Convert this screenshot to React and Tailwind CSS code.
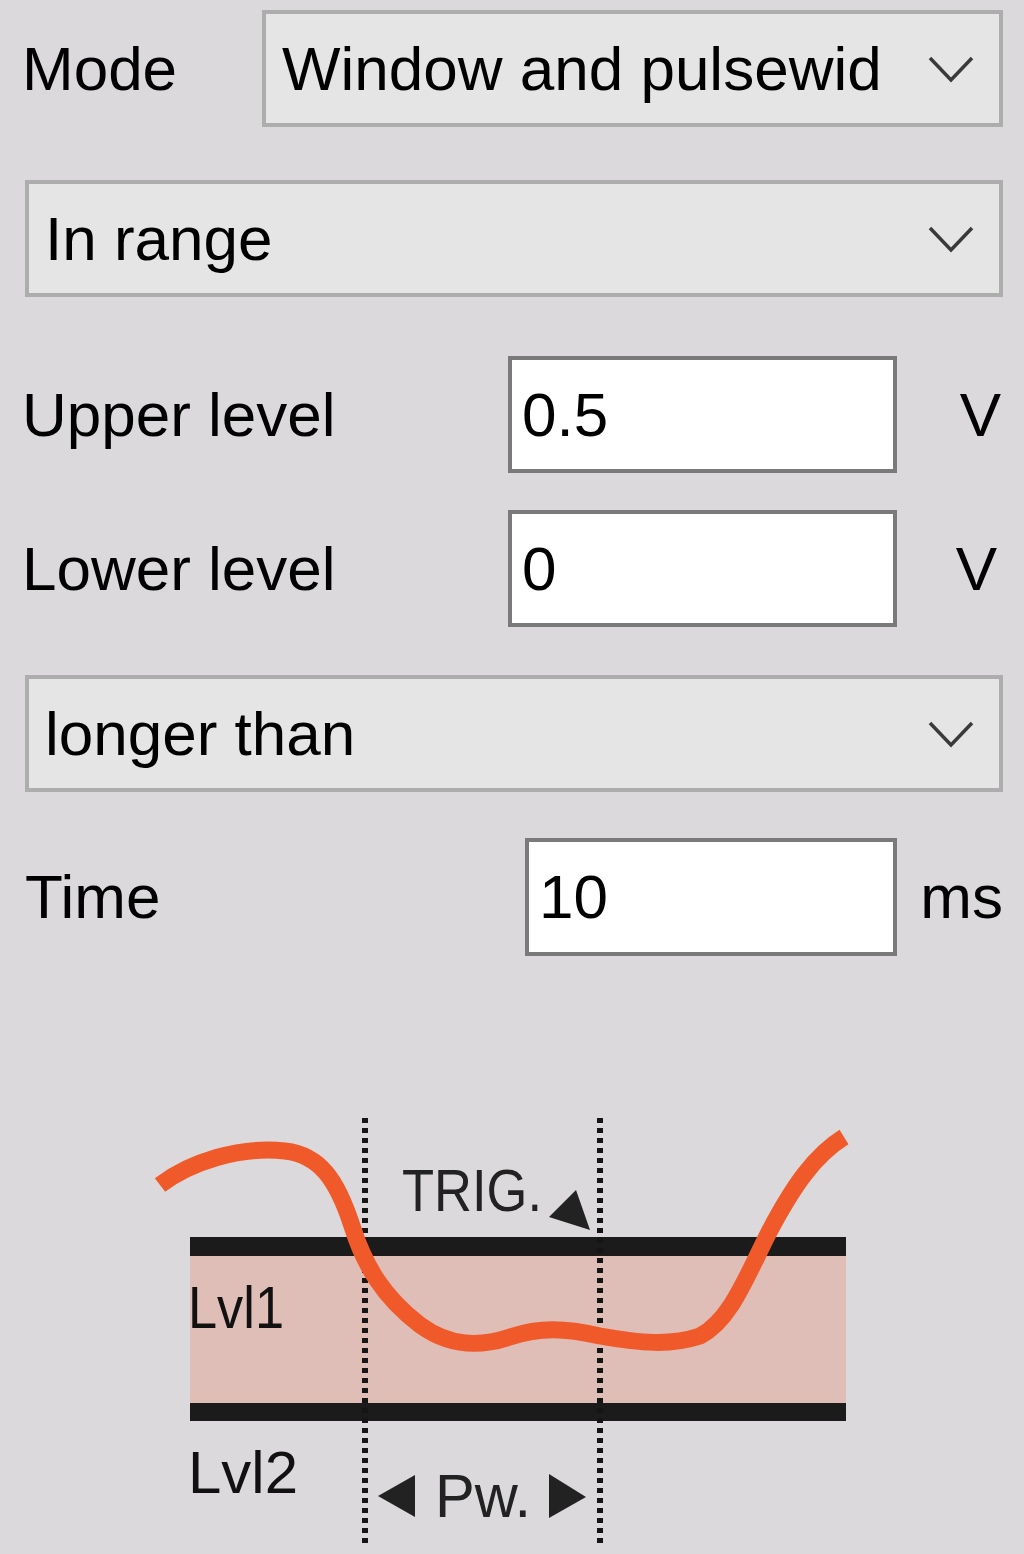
import React from "react";

const font = { fontFamily: '"Liberation Sans", Arial, sans-serif' };

function Chevron() {
  return (
    <svg width="48" height="28" viewBox="0 0 48 28" className="shrink-0">
      <polyline points="3,3 24,25 45,3" fill="none" stroke="#3a3a3a" strokeWidth="3.5" />
    </svg>
  );
}

function Combo({ text, className = "" }) {
  return (
    <div
      className={
        "flex items-center justify-between border-[4px] border-[#adadad] bg-[#e5e5e5] pl-[16px] pr-[24px] overflow-hidden " +
        className
      }
    >
      <span className="whitespace-nowrap text-[62px] leading-[76px] text-black">{text}</span>
      <Chevron />
    </div>
  );
}

function Field({ value, className = "" }) {
  return (
    <div
      className={
        "flex items-center border-[4px] border-[#7a7a7a] bg-white pl-[10px] h-full " + className
      }
    >
      <span className="text-[62px] leading-[76px] text-black">{value}</span>
    </div>
  );
}

export default function App() {
  return (
    <div className="w-[1024px] h-[1554px] bg-[#dbd9dc] flex flex-col overflow-hidden" style={font}>
      <div className="flex flex-col pl-[22px] pr-[21px] pt-[10px]">
        <div className="flex items-center h-[117px]">
          <div className="w-[240px] text-[62px] leading-[76px] text-black">Mode</div>
          <Combo text="Window and pulsewid" className="flex-1 h-full" />
        </div>
        <div className="flex h-[117px] mt-[53px] ml-[3px]">
          <Combo text="In range" className="flex-1 h-full" />
        </div>
        <div className="flex items-center h-[117px] mt-[59px]">
          <div className="w-[486px] text-[62px] leading-[76px] text-black">Upper level</div>
          <Field value="0.5" className="w-[389px]" />
          <div className="flex-1 text-right text-[62px] leading-[76px] text-black pr-[2px]">V</div>
        </div>
        <div className="flex items-center h-[117px] mt-[37px]">
          <div className="w-[486px] text-[62px] leading-[76px] text-black">Lower level</div>
          <Field value="0" className="w-[389px]" />
          <div className="flex-1 text-right text-[62px] leading-[76px] text-black pr-[6px]">V</div>
        </div>
        <div className="flex h-[117px] mt-[48px] ml-[3px]">
          <Combo text="longer than" className="flex-1 h-full" />
        </div>
        <div className="flex items-center h-[118px] mt-[46px]">
          <div className="w-[503px] pl-[3px] text-[62px] leading-[76px] text-black">Time</div>
          <Field value="10" className="w-[372px]" />
          <div className="flex-1 text-right text-[62px] leading-[76px] text-black">ms</div>
        </div>
      </div>
      <svg
        width="1024"
        height="454"
        viewBox="0 1100 1024 454"
        className="mt-[144px] shrink-0"
      >
        <rect x="190" y="1246" width="656" height="166" fill="#dfbeb7" />
        <rect x="190" y="1237" width="656" height="19" fill="#1b1b1b" />
        <rect x="190" y="1403" width="656" height="18" fill="#1b1b1b" />
        <line x1="365" y1="1118" x2="365" y2="1546" stroke="#151515" strokeWidth="6" strokeDasharray="5 5" />
        <line x1="600" y1="1118" x2="600" y2="1546" stroke="#151515" strokeWidth="6" strokeDasharray="5 5" />
        <path
          d="M160,1185 C190,1162 240,1146 285,1151 C320,1155 337,1180 352,1226 C364,1264 382,1296 420,1325 C450,1347 480,1347 510,1337 C540,1327 565,1328 600,1336 C640,1343 670,1346 700,1336 C730,1320 745,1280 768,1234 C793,1186 815,1155 844,1137"
          fill="none"
          stroke="#f05a2a"
          strokeWidth="17"
        />
        <text x="402" y="1211" fontSize="60" fill="#222" textLength="140" lengthAdjust="spacingAndGlyphs" style={font}>
          TRIG.
        </text>
        <polygon points="549,1217 576,1190 590,1230" fill="#222" />
        <text x="188" y="1328" fontSize="60" fill="#111" textLength="96" lengthAdjust="spacingAndGlyphs" style={font}>
          Lvl1
        </text>
        <text x="188" y="1493" fontSize="60" fill="#111" textLength="110" lengthAdjust="spacingAndGlyphs" style={font}>
          Lvl2
        </text>
        <polygon points="378,1496 415,1475 415,1517" fill="#222" />
        <text x="435" y="1517" fontSize="62" fill="#222" textLength="96" lengthAdjust="spacingAndGlyphs" style={font}>
          Pw.
        </text>
        <polygon points="549,1474 586,1497 549,1518" fill="#222" />
      </svg>
    </div>
  );
}
